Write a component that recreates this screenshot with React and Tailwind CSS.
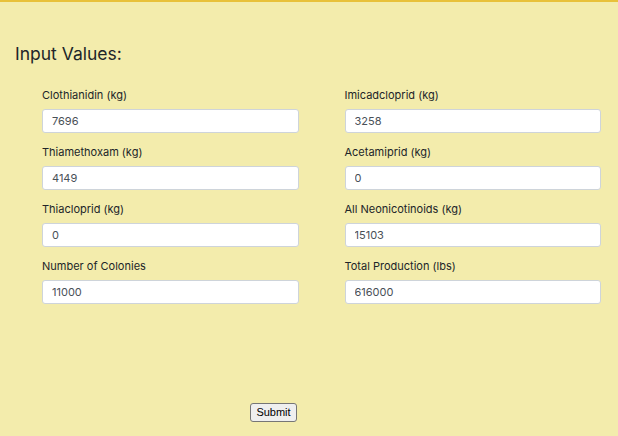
export default function App() {
  const left = [
    ["Clothianidin (kg)", "7696"],
    ["Thiamethoxam (kg)", "4149"],
    ["Thiacloprid (kg)", "0"],
    ["Number of Colonies", "11000"],
  ];
  const right = [
    ["Imicadcloprid (kg)", "3258"],
    ["Acetamiprid (kg)", "0"],
    ["All Neonicotinoids (kg)", "15103"],
    ["Total Production (lbs)", "616000"],
  ];
  const rows = [];
  for (let i = 0; i < 4; i++) rows.push(left[i], right[i]);
  return (
    <div
      className="w-[618px] h-[436px] bg-[#f3ecac] border-t-2 border-[#e8c13a] overflow-hidden"
      style={{ fontFamily: "Inter, 'Liberation Sans', sans-serif" }}
    >
      <h2 className="pl-[15px] pt-[42px] text-[17.5px] leading-[20px] text-[#212529] font-normal">
        Input Values:
      </h2>
      <div className="grid grid-cols-2 gap-x-[46px] gap-y-[11px] pl-[42px] pr-[17px] mt-[23px]">
        {rows.map(([label, value]) => (
          <div key={label} className="flex flex-col">
            <label className="text-[11px] leading-[16px] text-[#212529] mb-[6px]">{label}</label>
            <input
              defaultValue={value}
              className="h-[24px] w-full bg-white border border-[#ced4da] rounded-[3px] px-[9px] text-[11px] text-[#495057] outline-none"
              style={{ fontFamily: "Inter, 'Liberation Sans', sans-serif" }}
            />
          </div>
        ))}
      </div>
      <div className="pl-[250px] mt-[94px]">
        <button
          className="h-[19px] w-[47px] bg-[#efefef] border border-[#767676] rounded-[3px] text-[11px] leading-none text-black"
          style={{ fontFamily: "'Liberation Sans', Arial, sans-serif" }}
        >
          Submit
        </button>
      </div>
    </div>
  );
}
